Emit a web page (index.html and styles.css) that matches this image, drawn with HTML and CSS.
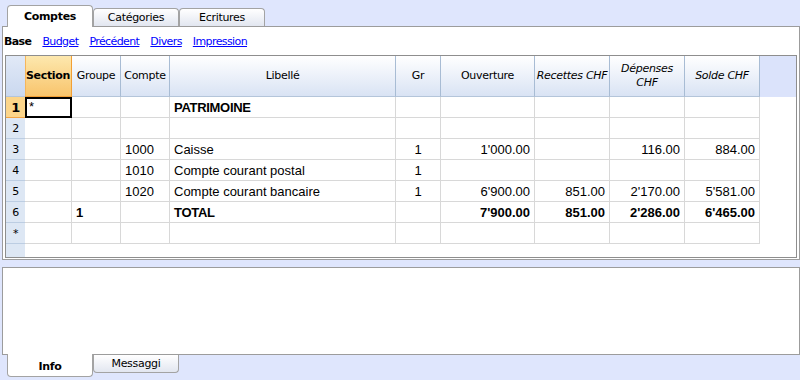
FILE: index.html
```html
<!DOCTYPE html>
<html lang="fr">
<head>
    <meta charset="UTF-8">
    <title>Comptes</title>
    <link rel="stylesheet" href="styles.css">
</head>
<body>
    <div class="tabs tabsTop">
        <div class="tab active">Comptes</div>
        <div class="tab">Catégories</div>
        <div class="tab">Ecritures</div>
    </div>

    <div class="panel panelTop">
        <div class="viewBar">
            <b>Base</b>
            <a href="#">Budget</a>
            <a href="#">Précédent</a>
            <a href="#">Divers</a>
            <a href="#">Impression</a>
        </div>
        <div class="gridFrame">
            <div class="grid">
                <!-- header -->
                <div class="h hn"></div>
                <div class="h hsel">Section</div>
                <div class="h">Groupe</div>
                <div class="h">Compte</div>
                <div class="h">Libellé</div>
                <div class="h">Gr</div>
                <div class="h">Ouverture</div>
                <div class="h i">Recettes CHF</div>
                <div class="h i">Dépenses<br>CHF</div>
                <div class="h i">Solde CHF</div>
                <div class="h hf"></div>

                <!-- row 1 -->
                <div class="rn current">1</div>
                <div class="c sel">*</div>
                <div class="c"></div>
                <div class="c"></div>
                <div class="c b">PATRIMOINE</div>
                <div class="c"></div>
                <div class="c"></div>
                <div class="c"></div>
                <div class="c"></div>
                <div class="c"></div>
                <div class="f"></div>

                <!-- row 2 -->
                <div class="rn">2</div>
                <div class="c"></div>
                <div class="c"></div>
                <div class="c"></div>
                <div class="c"></div>
                <div class="c"></div>
                <div class="c"></div>
                <div class="c"></div>
                <div class="c"></div>
                <div class="c"></div>
                <div class="f"></div>

                <!-- row 3 -->
                <div class="rn">3</div>
                <div class="c"></div>
                <div class="c"></div>
                <div class="c">1000</div>
                <div class="c">Caisse</div>
                <div class="c m">1</div>
                <div class="c n">1'000.00</div>
                <div class="c"></div>
                <div class="c n">116.00</div>
                <div class="c n">884.00</div>
                <div class="f"></div>

                <!-- row 4 -->
                <div class="rn">4</div>
                <div class="c"></div>
                <div class="c"></div>
                <div class="c">1010</div>
                <div class="c">Compte courant postal</div>
                <div class="c m">1</div>
                <div class="c"></div>
                <div class="c"></div>
                <div class="c"></div>
                <div class="c"></div>
                <div class="f"></div>

                <!-- row 5 -->
                <div class="rn">5</div>
                <div class="c"></div>
                <div class="c"></div>
                <div class="c">1020</div>
                <div class="c">Compte courant bancaire</div>
                <div class="c m">1</div>
                <div class="c n">6'900.00</div>
                <div class="c n">851.00</div>
                <div class="c n">2'170.00</div>
                <div class="c n">5'581.00</div>
                <div class="f"></div>

                <!-- row 6 -->
                <div class="rn">6</div>
                <div class="c"></div>
                <div class="c b">1</div>
                <div class="c"></div>
                <div class="c b">TOTAL</div>
                <div class="c"></div>
                <div class="c n b">7'900.00</div>
                <div class="c n b">851.00</div>
                <div class="c n b">2'286.00</div>
                <div class="c n b">6'465.00</div>
                <div class="f"></div>

                <!-- new row -->
                <div class="rn">*</div>
                <div class="c"></div>
                <div class="c"></div>
                <div class="c"></div>
                <div class="c"></div>
                <div class="c"></div>
                <div class="c"></div>
                <div class="c"></div>
                <div class="c"></div>
                <div class="c"></div>
                <div class="f"></div>
            </div>
        </div>
    </div>

    <div class="panel panelBottom"></div>

    <div class="tabs tabsBottom">
        <div class="tab active">Info</div>
        <div class="tab">Messaggi</div>
    </div>
</body>
</html>
```

FILE: styles.css
```css
* {
    box-sizing: border-box;
}
body {
    margin: 0;
    width: 800px;
    height: 380px;
    overflow: hidden;
    background-color: #dfe6fd;
    color: #000;
    font-family: "DejaVu Sans", sans-serif;
    font-size: 11px;
    letter-spacing: -0.3px;
}
.tabs {
    display: flex;
    padding-left: 7px;
    position: relative;
    z-index: 1;
}
.tab {
    width: 86px;
    display: flex;
    align-items: center;
    justify-content: center;
    border: 1px solid #a3a3a3;
    background: linear-gradient(#ffffff, #e2e6f0);
}
.tab.active {
    background: #fff;
    font-weight: bold;
}
.tabsTop {
    align-items: flex-end;
    height: 27px;
    margin-bottom: -1px;
}
.tabsTop .tab {
    height: 18px;
    margin-bottom: 1px;
    border-bottom: none;
    border-radius: 4px 4px 0 0;
}
.tabsTop .tab.active {
    height: 22px;
    margin-bottom: 0;
}
.tabsBottom {
    align-items: flex-start;
    margin-top: -1px;
}
.tabsBottom .tab {
    height: 18px;
    margin-top: 1px;
    border-top: none;
    border-radius: 0 0 4px 4px;
}
.tabsBottom .tab.active {
    height: 23px;
    margin-top: 0;
    padding-top: 2px;
}
.panel {
    margin-left: 2px;
    background-color: #fff;
    border: 1px solid #9c9c9c;
}
.panelTop {
    height: 234px;
    padding: 0 1px 1px;
}
.panelBottom {
    height: 88px;
    margin-top: 7px;
}
.viewBar {
    height: 28px;
    display: flex;
    align-items: center;
    gap: 11px;
    letter-spacing: -0.6px;
}
.viewBar a {
    color: #0000ff;
}
.gridFrame {
    height: 203px;
    margin: 0 1px;
    border: 1px solid #8e8e8e;
    background: linear-gradient(to right, #dde7f4 19px, #fff 19px);
}
.grid {
    display: grid;
    grid-template-columns: 19px 47px 49px 49px 226px 45px 94px 75px 75px 75px 1fr;
    grid-template-rows: 41px repeat(7, 21px);
}
.h {
    display: flex;
    align-items: center;
    justify-content: center;
    text-align: center;
    white-space: nowrap;
    line-height: 14px;
    background: linear-gradient(#ffffff, #d9e3f4);
    border-right: 1px solid #a8bcd4;
    border-bottom: 1px solid #b4c5da;
}
.h.i {
    font-style: italic;
}
.hn {
    background: linear-gradient(#e1e9f7, #cad8ef);
    border-right: none;
}
.hsel {
    font-weight: bold;
    background: linear-gradient(#fde8ae, #f8c46c);
    border-right-color: #f29f34;
    border-bottom-color: #f29f34;
    box-shadow: inset 1px 0 #f5b65c;
}
.hf {
    background: #dbe3fb;
    border: none;
}
.rn {
    display: flex;
    align-items: center;
    justify-content: center;
    border-bottom: 1px solid #bccde2;
}
.rn.current {
    background-color: #fcd58a;
    border-bottom-color: #f2a444;
    font-weight: bold;
    font-size: 13px;
}
.c {
    display: flex;
    align-items: center;
    padding: 0 4px;
    white-space: nowrap;
    font-family: "Liberation Sans", Arial, sans-serif;
    font-size: 13px;
    letter-spacing: 0;
    border-right: 1px solid #d8d8d8;
    border-bottom: 1px solid #d8d8d8;
}
.c.n {
    justify-content: flex-end;
}
.c.m {
    justify-content: center;
}
.c.b {
    font-weight: bold;
    letter-spacing: -0.3px;
}
.c.n.b {
    letter-spacing: 0;
}
.c.sel {
    align-items: flex-start;
    padding-top: 2px;
    outline: 2px solid #000;
    outline-offset: -2px;
}
```
